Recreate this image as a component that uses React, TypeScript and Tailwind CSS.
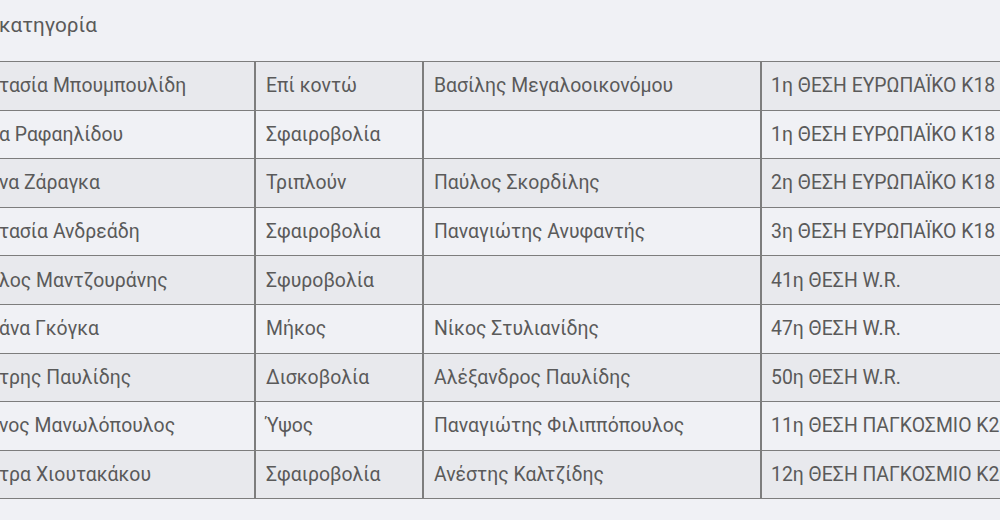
import React from "react";

const rows: [string, string, string, string][] = [
  ["τασία Μπουμπουλίδη", "Επί κοντώ", "Βασίλης Μεγαλοοικονόμου", "1η ΘΕΣΗ ΕΥΡΩΠΑΪΚΟ Κ18"],
  ["α Ραφαηλίδου", "Σφαιροβολία", "", "1η ΘΕΣΗ ΕΥΡΩΠΑΪΚΟ Κ18"],
  ["να Ζάραγκα", "Τριπλούν", "Παύλος Σκορδίλης", "2η ΘΕΣΗ ΕΥΡΩΠΑΪΚΟ Κ18"],
  ["τασία Ανδρεάδη", "Σφαιροβολία", "Παναγιώτης Ανυφαντής", "3η ΘΕΣΗ ΕΥΡΩΠΑΪΚΟ Κ18"],
  ["λος Μαντζουράνης", "Σφυροβολία", "", "41η ΘΕΣΗ W.R."],
  ["άνα Γκόγκα", "Μήκος", "Νίκος Στυλιανίδης", "47η ΘΕΣΗ W.R."],
  ["τρης Παυλίδης", "Δισκοβολία", "Αλέξανδρος Παυλίδης", "50η ΘΕΣΗ W.R."],
  ["νος Μανωλόπουλος", "Ύψος", "Παναγιώτης Φιλιππόπουλος", "11η ΘΕΣΗ ΠΑΓΚΟΣΜΙΟ Κ20"],
  ["τρα Χιουτακάκου", "Σφαιροβολία", "Ανέστης Καλτζίδης", "12η ΘΕΣΗ ΠΑΓΚΟΣΜΙΟ Κ20"],
];

export default function App() {
  return (
    <div
      className="w-[1000px] h-[520px] overflow-hidden bg-[#f0f1f5] text-[#5a5a5a]"
      style={{ fontFamily: "Roboto, 'Noto Sans', sans-serif" }}
    >
      <h2 className="pt-[11px] -ml-[1px] text-[20.7px] leading-[28px] font-normal text-[#5a5a5a]">
        κατηγορία
      </h2>
      <div className="mt-[22px] w-[1100px]">
        <div className="border-t border-[#7d7d7d]">
          {rows.map((r, i) => (
            <div
              key={i}
              className={`flex h-[48.6px] border-b border-[#7d7d7d] text-[19.4px] ${
                i % 2 === 0 ? "bg-[#e8e9ed]" : "bg-[#f0f1f5]"
              }`}
            >
              <div className="w-[257px] -ml-[1px] flex items-center whitespace-nowrap border-r-2 border-[#7d7d7d]">
                {r[0]}
              </div>
              <div className="w-[168px] pl-[10px] flex items-center whitespace-nowrap border-r-2 border-[#7d7d7d]">
                {r[1]}
              </div>
              <div className="w-[338px] pl-[10px] flex items-center whitespace-nowrap border-r-2 border-[#7d7d7d]">
                {r[2]}
              </div>
              <div className="flex-1 pl-[9px] flex items-center whitespace-nowrap">
                {r[3]}
              </div>
            </div>
          ))}
        </div>
      </div>
    </div>
  );
}
